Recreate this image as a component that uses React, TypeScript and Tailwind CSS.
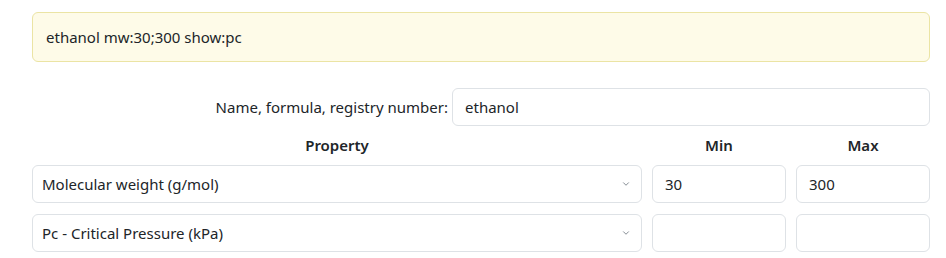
import { ChevronDown } from "lucide-react";

const font = { fontFamily: '"Noto Sans", "Open Sans", sans-serif' };

export default function App() {
  return (
    <div className="w-[946px] h-[258px] bg-white text-[#212529] text-[15px]" style={font}>
      <div className="pt-[12px] ml-[32px] w-[898px]">
        {/* query echo */}
        <div className="h-[50px] flex items-center px-[13px] bg-[#fefbe8] border border-[#ebe4a4] rounded-[6px]">
          ethanol mw:30;300 show:pc
        </div>
      </div>

      <div className="ml-[32px] w-[898px] mt-[26px] flex flex-col">
        {/* name field */}
        <div className="flex items-center justify-end gap-[4px]">
          <span>Name, formula, registry number:</span>
          <div className="w-[478px] h-[38px] flex items-center px-[12px] border border-[#dee2e6] rounded-[6px]">
            ethanol
          </div>
        </div>

        {/* header */}
        <div className="flex gap-[10px] h-[39px] items-center font-semibold">
          <div className="w-[610px] text-center">Property</div>
          <div className="w-[134px] text-center">Min</div>
          <div className="w-[134px] text-center">Max</div>
        </div>

        <div className="flex flex-col gap-[11px]">
          <Row label="Molecular weight (g/mol)" min="30" max="300" />
          <Row label="Pc - Critical Pressure (kPa)" min="" max="" />
        </div>
      </div>
    </div>
  );
}

function Row({ label, min, max }: { label: string; min: string; max: string }) {
  return (
    <div className="flex gap-[10px] h-[38px]">
      <div className="w-[610px] flex items-center justify-between pl-[9px] pr-[10px] border border-[#dee2e6] rounded-[6px]">
        <span>{label}</span>
        <ChevronDown size={10} strokeWidth={2} className="text-[#6c757d]" />
      </div>
      <div className="w-[134px] flex items-center px-[12px] border border-[#dee2e6] rounded-[6px]">{min}</div>
      <div className="w-[134px] flex items-center px-[12px] border border-[#dee2e6] rounded-[6px]">{max}</div>
    </div>
  );
}
